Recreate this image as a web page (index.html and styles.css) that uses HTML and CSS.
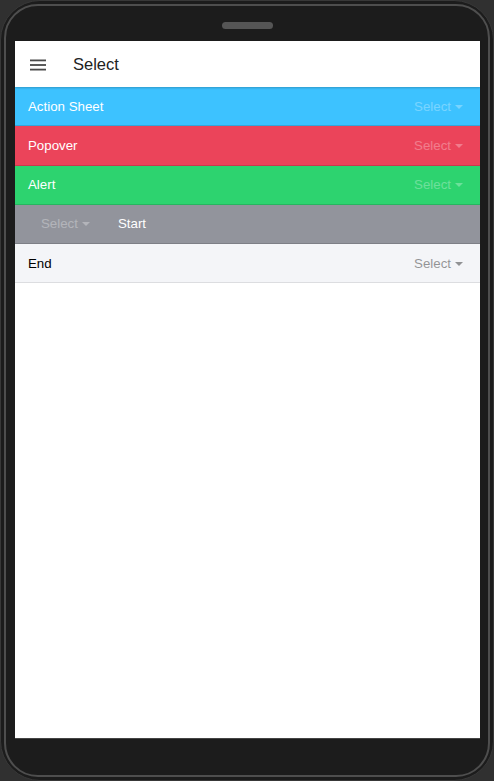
FILE: index.html
```html
<!DOCTYPE html>
<html>
<head>
<meta charset="utf-8">
<link rel="stylesheet" href="styles.css">
</head>
<body>
<div class="device">
  <div class="bezel">
    <div class="speaker"></div>
    <div class="screen">
      <header class="toolbar">
        <svg class="menu-icon" width="16" height="12" viewBox="0 0 16 12">
          <rect x="0" y="0.5" width="16" height="1.8" fill="#4a4a4a"/>
          <rect x="0" y="5.1" width="16" height="1.8" fill="#4a4a4a"/>
          <rect x="0" y="9.7" width="16" height="1.8" fill="#4a4a4a"/>
        </svg>
        <div class="title">Select</div>
      </header>
      <div class="list">
        <div class="item item-secondary">
          <span class="label">Action Sheet</span>
          <span class="select">Select<i class="caret"></i></span>
        </div>
        <div class="item item-danger">
          <span class="label">Popover</span>
          <span class="select">Select<i class="caret"></i></span>
        </div>
        <div class="item item-success">
          <span class="label">Alert</span>
          <span class="select">Select<i class="caret"></i></span>
        </div>
        <div class="item item-medium item-start">
          <span class="select">Select<i class="caret"></i></span>
          <span class="label">Start</span>
        </div>
        <div class="item item-light">
          <span class="label">End</span>
          <span class="select">Select<i class="caret"></i></span>
        </div>
      </div>
    </div>
  </div>
</div>
</body>
</html>
```

FILE: styles.css
```css
html, body {
  margin: 0;
  padding: 0;
  background: #303030;
}
body {
  font-family: "Liberation Sans", Arial, sans-serif;
}
.device {
  box-sizing: border-box;
  width: 494px;
  height: 781px;
  border-radius: 40px;
  background: #1c1c1c;
  border: 1px solid #383838;
  padding: 3px;
}
.bezel {
  box-sizing: border-box;
  height: 100%;
  border: 2px solid #4e4e4e;
  border-radius: 34px;
  padding: 16px 8px 36px 9px;
  display: flex;
  flex-direction: column;
  align-items: center;
}
.speaker {
  width: 51px;
  height: 7px;
  border-radius: 4px;
  background: #555555;
  margin-bottom: 12px;
  flex: none;
}
.screen {
  align-self: stretch;
  flex: 1;
  background: #ffffff;
  display: flex;
  flex-direction: column;
  border-bottom: 1px solid #444;
}
.toolbar {
  position: relative;
  z-index: 1;
  height: 46px;
  flex: none;
  display: flex;
  align-items: center;
  background: #fff;
  box-shadow: 0 1px 2px rgba(0, 0, 0, 0.22);
  padding-left: 15px;
}
.menu-icon {
  display: block;
  margin-top: 1px;
}
.title {
  margin-left: 27px;
  font-size: 16.5px;
  color: #222;
}
.list {
  display: flex;
  flex-direction: column;
}
.item {
  box-sizing: border-box;
  height: 39.25px;
  display: flex;
  align-items: center;
  justify-content: space-between;
  padding: 0 17px 0 13px;
  border-bottom: 1px solid rgba(0, 0, 0, 0.14);
  font-size: 13.3px;
  color: #fff;
}
.item-secondary { background: #3dc2ff; }
.item-danger { background: #eb445a; }
.item-success { background: #2dd36f; }
.item-medium { background: #92949c; }
.item-light { background: #f4f5f8; color: #000; border-bottom-color: #dcdde0; }
.item-start {
  justify-content: flex-start;
  padding-left: 26px;
}
.item-start .select {
  margin-right: 28px;
}
.select {
  display: flex;
  align-items: center;
  opacity: 0.3;
}
.item-light .select {
  opacity: 0.4;
}
.caret {
  display: block;
  width: 0;
  height: 0;
  margin-left: 4px;
  margin-top: 1px;
  border-left: 4px solid transparent;
  border-right: 4px solid transparent;
  border-top: 4px solid currentColor;
}
```
